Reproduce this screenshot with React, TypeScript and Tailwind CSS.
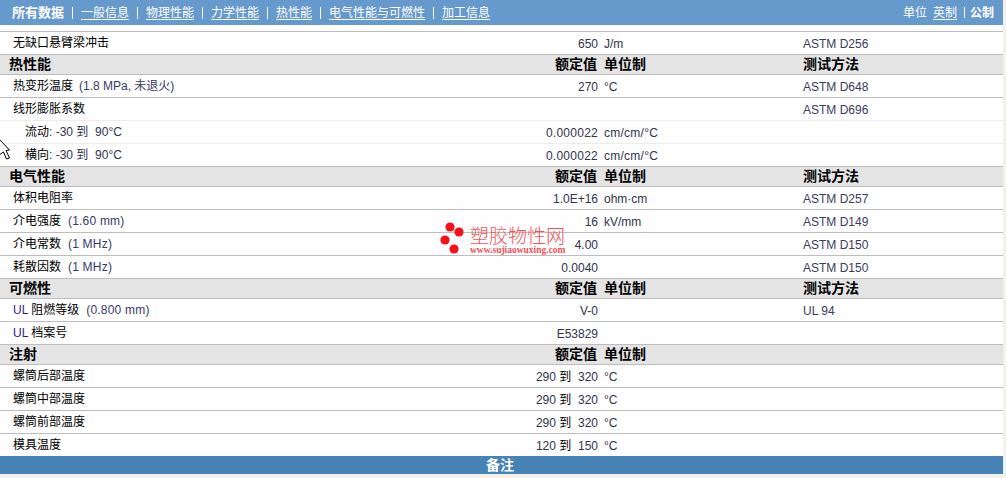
import React from 'react';

type Row = { name?: React.ReactNode; value?: React.ReactNode; unit?: string; method?: string; light?: boolean; indent?: boolean };

const ValueRange = ({ from, to }: { from: string; to: string }) => (
  <>
    {from} <span className="text-black">到</span>&nbsp; {to}
  </>
);

const Note = ({ children }: { children: React.ReactNode }) => (
  <span className="ml-[7px] tracking-[0.2px] text-[#3a3a6a]">{children}</span>
);

const DataRow = ({ name, value, unit, method, light, indent }: Row) => (
  <div
    className={`grid h-[23px] grid-cols-[598px_199px_1fr] items-center border-t ${
      light ? 'border-[#ececec]' : 'border-[#bdbdbd]'
    }`}
  >
    <div className={`relative flex items-center justify-between text-black ${indent ? 'pl-[25px]' : 'pl-[13px]'}`}>
      <span className="whitespace-nowrap">{name}</span>
      <span className={`whitespace-nowrap pt-px text-[#33334d] ${indent ? 'tracking-[0.25px]' : ''}`}>{value}</span>
    </div>
    <div className={`pl-[6px] pt-px text-[#33334d] ${indent ? 'tracking-[0.25px]' : ''}`}>{unit}</div>
    <div className="pl-[6px] pt-px text-[#3c3c5c]">{method}</div>
  </div>
);

const Section = ({ title, unit = true, method = true }: { title: string; unit?: boolean; method?: boolean }) => (
  <div className="grid h-[20px] grid-cols-[598px_199px_1fr] items-center border-t border-[#bdbdbd] bg-[#e4e4e4] pb-px text-[14px] font-bold text-black">
    <div className="flex items-center justify-between pl-[9px] pr-px">
      <span>{title}</span>
      <span>额定值</span>
    </div>
    <div className="pl-[6px]">{unit && '单位制'}</div>
    <div className="pl-[6px]">{method && '测试方法'}</div>
  </div>
);

const navItems = ['一般信息', '物理性能', '力学性能', '热性能', '电气性能与可燃性', '加工信息'];

const UL = () => <span className="text-[#3a1a80]">UL</span>;

export default function App() {
  return (
    <div
      className="relative h-[478px] w-[1006px] overflow-hidden bg-[#f1f1ee] text-[12px] leading-none"
      style={{ fontFamily: '"Liberation Sans", "Noto Sans CJK SC", sans-serif' }}
    >
      <div className="w-[1003px] bg-[#fdfefd]">
        {/* top nav */}
        <div className="flex h-[25px] items-center justify-between bg-[#6699cc] pl-[12px] pr-[9px] text-white">
          <div className="flex items-center">
            <span className="text-[13px] font-bold">所有数据</span>
            {navItems.map((item) => (
              <span key={item} className="flex items-center">
                <span className="mx-[8px] h-[12px] w-px bg-white" />
                <a className="underline underline-offset-2">{item}</a>
              </span>
            ))}
          </div>
          <div className="flex items-center">
            <span>单位</span>
            <a className="ml-[6px] underline underline-offset-2">英制</a>
            <span className="ml-[7px] mr-[5px] h-[11px] w-px bg-white" />
            <span className="font-bold">公制</span>
          </div>
        </div>

        <div className="h-[6px]" />

        <DataRow name="无缺口悬臂梁冲击" value="650" unit="J/m" method="ASTM D256" />
        <Section title="热性能" />
        <DataRow name={<>热变形温度<span className="ml-[6px] text-[#3a3a6a]">(1.8 MPa, 未退火)</span></>} value="270" unit="°C" method="ASTM D648" />
        <DataRow name="线形膨胀系数" method="ASTM D696" />
        <DataRow light indent name={<>流动<span className="text-[#33334d]">: -30 到&nbsp; 90°C</span></>} value="0.000022" unit="cm/cm/°C" />
        <DataRow light indent name={<>横向<span className="text-[#33334d]">: -30 到&nbsp; 90°C</span></>} value="0.000022" unit="cm/cm/°C" />
        <Section title="电气性能" />
        <DataRow name="体积电阻率" value="1.0E+16" unit="ohm·cm" method="ASTM D257" />
        <DataRow name={<>介电强度<Note>(1.60 mm)</Note></>} value="16" unit="kV/mm" method="ASTM D149" />
        <DataRow name={<>介电常数<Note>(1 MHz)</Note></>} value="4.00" method="ASTM D150" />
        <DataRow name={<>耗散因数<Note>(1 MHz)</Note></>} value="0.0040" method="ASTM D150" />
        <Section title="可燃性" />
        <DataRow name={<><UL /> 阻燃等级<Note>(0.800 mm)</Note></>} value="V-0" method="UL 94" />
        <DataRow name={<><UL /> 档案号</>} value="E53829" />
        <Section title="注射" method={false} />
        <DataRow name="螺筒后部温度" value={<ValueRange from="290" to="320" />} unit="°C" />
        <DataRow name="螺筒中部温度" value={<ValueRange from="290" to="320" />} unit="°C" />
        <DataRow name="螺筒前部温度" value={<ValueRange from="290" to="320" />} unit="°C" />
        <DataRow name="模具温度" value={<ValueRange from="120" to="150" />} unit="°C" />

        <div className="flex h-[18px] items-center justify-center bg-[#4682b4] pb-px pr-[3px] text-[14px] font-bold text-white">备注</div>
      </div>

      {/* mouse pointer caught in the screenshot */}
      <svg className="absolute left-0 top-[138px]" width="11" height="22" viewBox="0 0 11 22">
        <path d="M-1 1 L9.5 12 L6 12.5 L9.5 20 L6.5 21 L3.5 14 L-1 17 Z" fill="#fff" stroke="#000" strokeWidth="1" />
      </svg>

      {/* site watermark */}
      <div className="absolute left-[440px] top-[222px] flex items-start">
        <svg width="30" height="36" viewBox="0 0 30 36">
          <circle cx="10" cy="5" r="4.6" fill="#f5101c" />
          <circle cx="19" cy="10" r="4.6" fill="#f5101c" />
          <circle cx="5" cy="18" r="4.6" fill="#f5101c" />
          <circle cx="14" cy="27" r="4.6" fill="#f5101c" />
        </svg>
        <div className="mt-[5px] flex flex-col text-[#f4525a]">
          <span className="whitespace-nowrap text-[19px] font-light leading-[20px]">塑胶物性网</span>
          <span className="-mt-px whitespace-nowrap text-[9.5px] font-bold leading-[9px]" style={{ fontFamily: '"Liberation Serif", serif' }}>
            www.sujiaowuxing.com
          </span>
        </div>
      </div>
    </div>
  );
}
